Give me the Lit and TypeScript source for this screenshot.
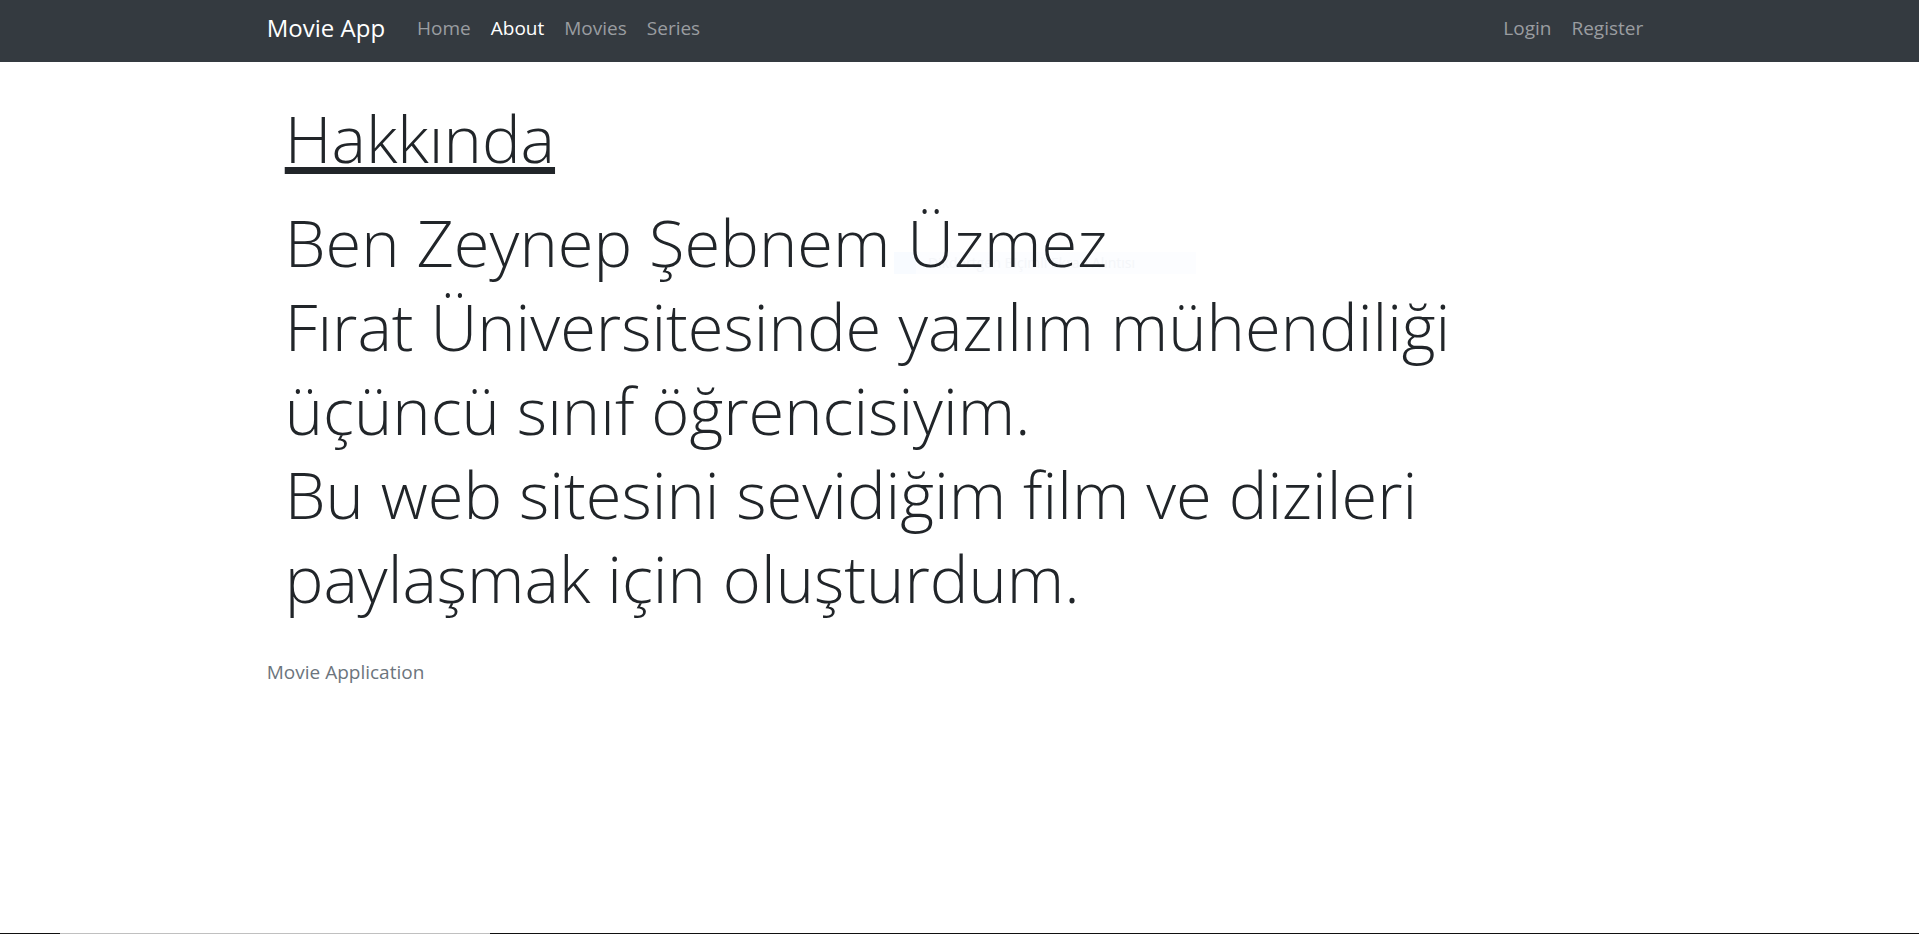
import { LitElement, html, css } from "lit";
import { customElement } from "lit/decorators.js";

@customElement("app-root")
export class AppRoot extends LitElement {
  static styles = css`
    :host {
      display: flex;
      flex-direction: column;
      min-height: 100vh;
      position: relative;
      box-sizing: border-box;
      background: #fff;
      color: #212529;
      font-family: "Segoe UI", "Open Sans", "Noto Sans", sans-serif;
      font-size: 19px;
      line-height: 30px;
    }
    .navbar { background: #343a40; }
    .container {
      width: 72.2%;
      margin: 0 auto;
      padding-right: 9px;
      box-sizing: border-box;
    }
    .bar {
      display: flex;
      align-items: center;
      height: 62px;
      padding-bottom: 6px;
    }
    a { text-decoration: none; color: #9a9da0; }
    .brand { color: #fff; font-size: 24px; margin-right: 32px; }
    .links { display: flex; gap: 20px; }
    .links .active { color: #fff; }
    .auth { margin-left: auto; }
    .content {
      position: relative;
      z-index: 1;
      padding-top: 34px;
      padding-left: 18px;
    }
    h1, p {
      font-size: 65px;
      line-height: 84px;
      font-weight: 300;
      margin: 0 0 20px;
    }
    u { text-decoration-thickness: 7px; text-underline-offset: 4px; }
    .footer { color: #6c757d; padding-top: 17px; }
    /* Fading capture tooltip that floats behind the paragraph. */
    .hint {
      position: absolute;
      left: 894px;
      top: 252px;
      width: 302px;
      display: flex;
      gap: 12px;
      background: #fcfdff;
      color: #f4f6f9;
      font-size: 14px;
      line-height: 22px;
    }
    .hint-icon { width: 22px; background: #f8fbff; }
    .edge { margin-top: auto; height: 1px; background: #111; display: flex; }
    .thumb { margin-left: 60px; width: 430px; background: #c0c0c0; }
  `;
  render() {
    return html`
      <nav class="navbar">
        <div class="container bar">
          <a class="brand" href="#">Movie App</a>
          <div class="links">
            <a href="#">Home</a>
            <a class="active" href="#" aria-current="page">About</a>
            <a href="#">Movies</a>
            <a href="#">Series</a>
          </div>
          <div class="links auth">
            <a href="#">Login</a>
            <a href="#">Register</a>
          </div>
        </div>
      </nav>
      <main class="container content">
        <h1><u>Hakkında</u></h1>
        <p>
          Ben Zeynep Şebnem Üzmez<br />
          Fırat Üniversitesinde yazılım mühendiliği üçüncü sınıf öğrencisiyim.<br />
          Bu web sitesini sevidiğim film ve dizileri paylaşmak için oluşturdum.
        </p>
      </main>
      <footer class="container footer">Movie Application</footer>
      <div class="hint" aria-hidden="true">
        <span class="hint-icon"></span>
        <span>Dikdörtgen Biçimli Ekran Alıntısı</span>
      </div>
      <div class="edge"><div class="thumb"></div></div>
    `;
  }
}
